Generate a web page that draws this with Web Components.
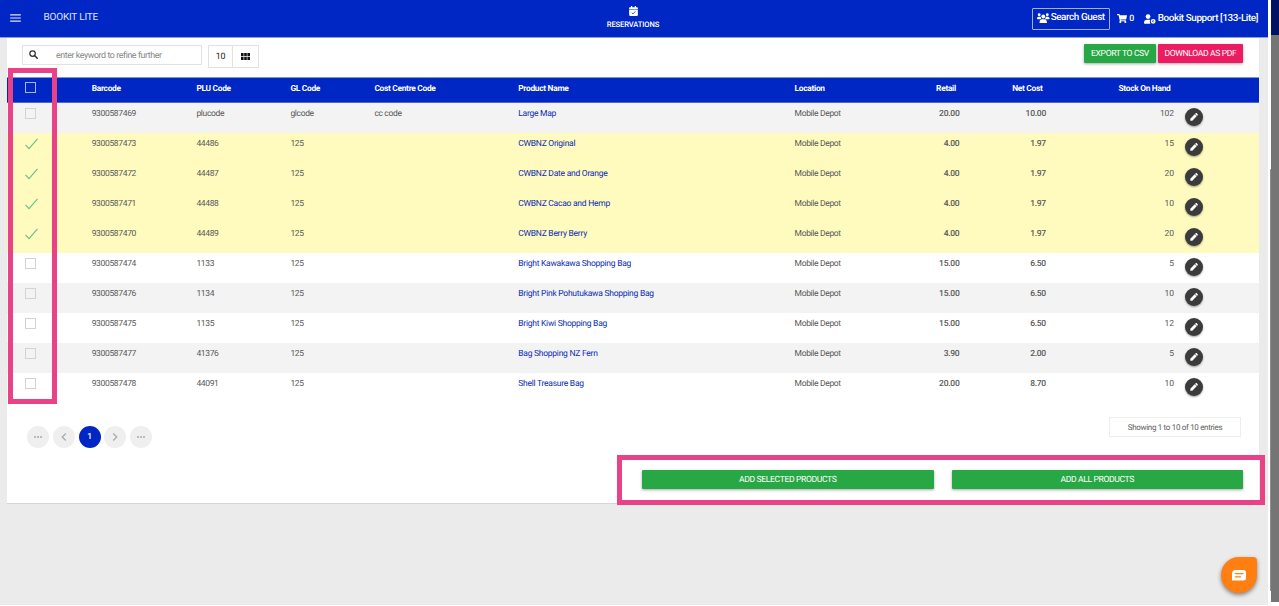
<!DOCTYPE html>
<html lang="en">
<head>
<meta charset="utf-8">
<title>Bookit Lite</title>
<style>
  html, body {
    margin: 0;
    height: 606px;
    overflow: hidden;
    background: #fff;
    font-family: Roboto, "Liberation Sans", sans-serif;
    text-rendering: geometricPrecision;
  }
</style>
</head>
<body>
<bk-app></bk-app>

<script>
const ICONS = {
  menu: ['0 0 12 9', '<path d="M0 1h12M0 4.500h12M0 8h12" stroke="currentColor" stroke-width="1.300"/>'],
  calendar: ['0 0 448 512', '<path fill="currentColor" d="M436 160H12c-6.600 0-12-5.400-12-12v-36c0-26.500 21.500-48 48-48h48V12c0-6.600 5.400-12 12-12h40c6.600 0 12 5.400 12 12v52h128V12c0-6.600 5.400-12 12-12h40c6.600 0 12 5.400 12 12v52h48c26.500 0 48 21.500 48 48v36c0 6.600-5.400 12-12 12zM12 192h424c6.600 0 12 5.400 12 12v260c0 26.500-21.500 48-48 48H48c-26.500 0-48-21.500-48-48V204c0-6.600 5.400-12 12-12z"/><path d="M135 350l60 55 120-125" fill="none" stroke="#0027c4" stroke-width="42"/>'],
  search: ['0 0 24 24', '<circle cx="9.500" cy="9.500" r="7.300" fill="none" stroke="currentColor" stroke-width="3.300"/><path d="M15.500 15.500l6.500 6.500" stroke="currentColor" stroke-width="4" stroke-linecap="round"/>'],
  grid: ['0 0 9 7', '<path fill="currentColor" d="M0 0h2.600v3.100H0zM3.200 0h2.600v3.100H3.200zM6.400 0H9v3.100H6.400zM0 3.800h2.600v3.100H0zM3.200 3.800h2.600v3.100H3.200zM6.400 3.800H9v3.100H6.400z"/>'],
  users: ['0 0 640 512', '<g fill="currentColor"><circle cx="112" cy="90" r="72"/><circle cx="528" cy="90" r="72"/><circle cx="320" cy="180" r="98"/><path d="M0 285c0-55 35-95 85-95h60c25 0 45 9 58 24-7 55 12 85 35 106H20c-12 0-20-8-20-20zM640 285c0-55-35-95-85-95h-60c-25 0-45 9-58 24 7 55-12 85-35 106h218c12 0 20-8 20-20zM128 480c0-90 55-160 135-160h114c80 0 135 70 135 160 0 18-12 32-30 32H158c-18 0-30-14-30-32z"/></g>'],
  cart: ['0 0 576 512', '<path fill="currentColor" d="M528 301l47-208c4-15-8-29-23-29H159l-9-45C148 8 138 0 126 0H24C11 0 0 11 0 24v16c0 13 11 24 24 24h70l70 343c-17 10-28 28-28 49 0 31 25 56 56 56s56-25 56-56c0-16-6-30-17-40h210c-11 10-17 24-17 40 0 31 25 56 56 56s56-25 56-56c0-22-13-41-32-50l6-26c3-15-8-29-24-29H218l-6-32h293c11 0 21-8 23-18z"/>'],
  agent: ['0 0 640 512', '<g fill="currentColor"><circle cx="215" cy="125" r="125"/><path d="M0 460c0-95 65-160 150-160h130c22 0 40 4 56 12-36 60-33 135 14 200H48c-27 0-48-25-48-52z"/></g><circle cx="490" cy="380" r="92" fill="none" stroke="currentColor" stroke-width="75"/><path d="M480 325v62h55" fill="none" stroke="currentColor" stroke-width="32"/>'],
  pencil: ['0 0 24 24', '<path fill="currentColor" d="M1 23v-6L14 4l6 6L7 23zM15.200 2.800l1.800-1.700c1-1 2.500-1 3.500 0l2.400 2.400c1 1 1 2.500 0 3.500l-1.700 1.800z"/>'],
  tick: ['0 0 13 12', '<path d="M.5 6.800 4 10.600 12.500 .8" fill="none" stroke="currentColor" stroke-width="1.100"/>'],
  dots: ['0 0 10 10', '<path d="M1 5h2M4 5h2M7 5h2" stroke="currentColor" stroke-width="1.500"/>'],
  prev: ['0 0 10 10', '<path d="M6.800 1.500 3.200 5l3.600 3.500" fill="none" stroke="currentColor" stroke-width="1.300"/>'],
  next: ['0 0 10 10', '<path d="M3.200 1.500 6.800 5 3.200 8.500" fill="none" stroke="currentColor" stroke-width="1.300"/>'],
  chat: ['0 0 14 11', '<path fill="#fff" d="M3.500 0h8Q14 0 14 2.500V8q0 2.500-2.500 2.500H0V3.500Q0 0 3.500 0z"/><path d="M3.300 3.600h7.800M3.300 6.900h5.200" stroke="#ff7f13" stroke-width="1.200" stroke-linecap="round"/>']
};

class BkIcon extends HTMLElement {
  constructor() {
    super();
    this.attachShadow({ mode: 'open' });
  }

  connectedCallback() {
    const [box, shape] = ICONS[this.getAttribute('name')];
    this.shadowRoot.innerHTML = `
      <style>
        :host { display: inline-block; flex: none; }
        svg { display: block; width: 100%; height: 100%; }
      </style>
      <svg viewBox="${box}">${shape}</svg>`;
  }
}
customElements.define('bk-icon', BkIcon);

class BkHeader extends HTMLElement {
  constructor() {
    super();
    this.attachShadow({ mode: 'open' });
    this.shadowRoot.innerHTML = `
      <style>
        :host {
          display: grid;
          grid-template-columns: 1fr 100px 1fr;
          box-sizing: border-box;
          height: 38px;
          padding: 0 10px;
          background: #0027c4;
          color: #fff;
          border-bottom: 1px solid #8d9de2;
        }
        .left, .right { display: flex; align-items: center; }
        .left { font-size: 10px; letter-spacing: -.2px; color: #dfe4f8; padding-bottom: 2px; }
        .left bk-icon { width: 11px; height: 8px; margin-right: 22.500px; }
        .center {
          display: flex;
          flex-direction: column;
          align-items: center;
          padding-top: 6px;
          margin-left: -2px;
          font-size: 7.600px;
          letter-spacing: -.12px;
          font-weight: 500;
        }
        .center bk-icon { width: 9px; height: 10px; margin-bottom: 4px; }
        .right {
          justify-content: flex-end;
          font-size: 9.900px;
          letter-spacing: -.41px;
          font-weight: 500;
          white-space: nowrap;
        }
        .guest {
          display: flex;
          box-sizing: border-box;
          width: 78px;
          height: 22px;
          padding: 0 0 2px 4.500px;
          align-items: center;
          border: 1px solid #a3b1eb;
          border-radius: 1px;
        }
        .guest bk-icon { width: 12.500px; height: 10px; margin-right: 1px; }
        .cart { width: 10px; height: 9px; margin: 0 2.500px 0 7px; }
        .count { font-size: 8.800px; margin-right: 10.500px; }
        .agent { width: 12px; height: 10px; margin-right: 1.500px; }
      </style>
      <div class="left"><bk-icon name="menu"></bk-icon><span>BOOKIT LITE</span></div>
      <div class="center"><bk-icon name="calendar"></bk-icon><span>RESERVATIONS</span></div>
      <div class="right">
        <div class="guest"><bk-icon name="users"></bk-icon><span>Search Guest</span></div>
        <bk-icon class="cart" name="cart"></bk-icon><span class="count">0</span>
        <bk-icon class="agent" name="agent"></bk-icon><span>Bookit Support [133-Lite]</span>
      </div>`;
  }
}
customElements.define('bk-header', BkHeader);

class BkButton extends HTMLElement {
  constructor() {
    super();
    this.attachShadow({ mode: 'open' });
    this.shadowRoot.innerHTML = `
      <style>
        :host {
          display: flex;
          align-items: center;
          justify-content: center;
          height: 19px;
          background: #28a745;
          color: #fff;
          font-size: 8.600px;
          letter-spacing: -.37px;
          border-radius: 1px;
          box-shadow: 0 1px 3px rgba(0, 0, 0, .35);
          white-space: nowrap;
        }
        :host([kind="pink"]) { background: #ec1c62; }
      </style>
      <slot></slot>`;
  }
}
customElements.define('bk-button', BkButton);

class BkToolbar extends HTMLElement {
  constructor() {
    super();
    this.attachShadow({ mode: 'open' });
    this.shadowRoot.innerHTML = `
      <style>
        :host {
          display: flex;
          align-items: flex-start;
          box-sizing: border-box;
          height: 38.500px;
          padding: 7px 16px 0 15px;
        }
        .search {
          display: flex;
          align-items: center;
          box-sizing: border-box;
          width: 180px;
          height: 20px;
          border: 1px solid #e2e2e2;
          padding-left: 6px;
          font-size: 8.800px;
          letter-spacing: -.4px;
          color: #858585;
        }
        .search span { padding-top: 1px; }
        .search bk-icon { width: 9px; height: 9px; margin: -1px 18px 0 0; color: #333; }
        .view {
          display: flex;
          box-sizing: border-box;
          width: 51px;
          height: 23px;
          margin-left: 6px;
          border: 1px solid #e2e2e2;
          font-size: 8.800px;
          letter-spacing: -.2px;
          color: #222;
        }
        .view div { width: 25px; display: flex; align-items: center; justify-content: center; }
        .view div:first-child { width: 23px; }
        .view div + div { border-left: 1px solid #e2e2e2; }
        .view bk-icon { width: 9px; height: 7px; color: #111; }
        .space { flex: 1; }
        bk-button { margin-top: -1px; }
        .csv { width: 72px; margin-right: 2px; }
        .pdf { width: 85px; }
      </style>
      <div class="search"><bk-icon name="search"></bk-icon><span>enter keyword to refine further</span></div>
      <div class="view"><div>10</div><div><bk-icon name="grid"></bk-icon></div></div>
      <div class="space"></div>
      <bk-button class="csv">EXPORT TO CSV</bk-button>
      <bk-button class="pdf" kind="pink">DOWNLOAD AS PDF</bk-button>`;
  }
}
customElements.define('bk-toolbar', BkToolbar);

const GRID = 'grid-template-columns: 84.700px 104.700px 94px 84px 143.900px 276.300px 100.400px 64.500px 86.500px 128px 40px;';

class BkRow extends HTMLElement {
  constructor() {
    super();
    this.attachShadow({ mode: 'open' });
  }

  connectedCallback() {
    const cells = this.getAttribute('cells').split('|');
    const checked = this.hasAttribute('checked');
    const head = this.hasAttribute('head');
    this.shadowRoot.innerHTML = `
      <style>
        :host {
          display: grid;
          ${GRID}
          box-sizing: border-box;
          height: 30px;
          padding-top: 5.400px;
          line-height: 12px;
          font-size: 8.500px;
          letter-spacing: -.34px;
          color: #595959;
          background: #fff;
          white-space: nowrap;
        }
        :host([odd]) { background: #f3f3f3; }
        :host([checked]) { background: #fffbbf; }
        :host([head]) {
          height: 26px;
          padding-top: 6.500px;
          background: #0027c4;
          color: #fff;
          font-weight: 700;
          font-size: 8.400px;
          letter-spacing: -.3px;
          box-shadow: inset 0 1px #7f92df, inset 0 -1px #4d67d6;
        }
        .box {
          display: block;
          box-sizing: border-box;
          width: 11px;
          height: 11px;
          margin-left: 18px;
          border: 1px solid #d3d3d3;
        }
        :host([head]) .box { border-color: #a9b5e8; margin-top: -1px; }
        .tick { width: 13px; height: 12px; margin-left: 18px; color: #66bf8d; }
        .name { color: #0d2cb4; letter-spacing: -.26px; }
        .num { text-align: right; }
        .stock { letter-spacing: -.1px; }
        .bold { font-weight: 500; letter-spacing: -.26px; }
        :host([head]) .name { color: #fff; letter-spacing: -.3px; }
        :host([head]) .num { padding-right: 3.500px; letter-spacing: -.3px; font-weight: 700; }
        .edit {
          display: flex;
          align-items: center;
          justify-content: center;
          width: 18px;
          height: 18px;
          margin: .6px 0 0 11px;
          border-radius: 50%;
          background: #3b3b3b;
          color: #fff;
          box-shadow: 0 1px 2px rgba(0, 0, 0, .4);
        }
        .edit bk-icon { width: 8px; height: 8px; }
      </style>
      <div>${checked ? '<bk-icon class="tick" name="tick"></bk-icon>' : '<span class="box"></span>'}</div>
      <div>${cells[0]}</div>
      <div>${cells[1]}</div>
      <div>${cells[2]}</div>
      <div>${cells[3]}</div>
      <div class="name">${cells[4]}</div>
      <div>${cells[5]}</div>
      <div class="num bold">${cells[6]}</div>
      <div class="num bold">${cells[7]}</div>
      <div class="num stock">${cells[8]}</div>
      ${head ? '' : '<div class="edit"><bk-icon name="pencil"></bk-icon></div>'}`;
  }
}
customElements.define('bk-row', BkRow);

const PRODUCTS = [
  ['9300587469|plucode|glcode|cc code|Large Map|Mobile Depot|20.00|10.00|102', false],
  ['9300587473|44486|125||CWBNZ Original|Mobile Depot|4.00|1.97|15', true],
  ['9300587472|44487|125||CWBNZ Date and Orange|Mobile Depot|4.00|1.97|20', true],
  ['9300587471|44488|125||CWBNZ Cacao and Hemp|Mobile Depot|4.00|1.97|10', true],
  ['9300587470|44489|125||CWBNZ Berry Berry|Mobile Depot|4.00|1.97|20', true],
  ['9300587474|1133|125||Bright Kawakawa Shopping Bag|Mobile Depot|15.00|6.50|5', false],
  ['9300587476|1134|125||Bright Pink Pohutukawa Shopping Bag|Mobile Depot|15.00|6.50|10', false],
  ['9300587475|1135|125||Bright Kiwi Shopping Bag|Mobile Depot|15.00|6.50|12', false],
  ['9300587477|41376|125||Bag Shopping NZ Fern|Mobile Depot|3.90|2.00|5', false],
  ['9300587478|44091|125||Shell Treasure Bag|Mobile Depot|20.00|8.70|10', false]
];

class BkTable extends HTMLElement {
  constructor() {
    super();
    this.attachShadow({ mode: 'open' });
    // stripes start on the first row
    this.shadowRoot.innerHTML = `
      <style>:host { display: block; }</style>
      <bk-row head cells="Barcode|PLU Code|GL Code|Cost Centre Code|Product Name|Location|Retail|Net Cost|Stock On Hand"></bk-row>
      ${PRODUCTS.map(([cells, checked], i) =>
        `<bk-row cells="${cells}" ${i % 2 ? '' : 'odd'} ${checked ? 'checked' : ''}></bk-row>`
      ).join('')}`;
  }
}
customElements.define('bk-table', BkTable);

class BkPager extends HTMLElement {
  constructor() {
    super();
    this.attachShadow({ mode: 'open' });
    this.shadowRoot.innerHTML = `
      <style>
        :host {
          display: flex;
          align-items: flex-start;
          justify-content: space-between;
          padding: 14.500px 18px 0 20px;
        }
        .pages { display: flex; gap: 3.800px; padding-top: 9px; }
        .pages div {
          display: flex;
          align-items: center;
          justify-content: center;
          width: 22px;
          height: 22px;
          border-radius: 50%;
          background: #efefef;
          color: #aaa;
          font-size: 8.500px;
        }
        .pages .current { background: #0027c4; color: #fff; font-weight: 500; }
        bk-icon { width: 10px; height: 10px; }
        .info {
          display: flex;
          align-items: center;
          justify-content: center;
          box-sizing: border-box;
          width: 132px;
          height: 20px;
          border: 1px solid #ededed;
          font-size: 8px;
          letter-spacing: -.32px;
          color: #606060;
        }
      </style>
      <div class="pages">
        <div><bk-icon name="dots"></bk-icon></div>
        <div><bk-icon name="prev"></bk-icon></div>
        <div class="current">1</div>
        <div><bk-icon name="next"></bk-icon></div>
        <div><bk-icon name="dots"></bk-icon></div>
      </div>
      <div class="info">Showing 1 to 10 of 10 entries</div>`;
  }
}
customElements.define('bk-pager', BkPager);

class BkMarker extends HTMLElement {
  constructor() {
    super();
    this.attachShadow({ mode: 'open' });
    this.shadowRoot.innerHTML = `
      <style>
        :host {
          display: block;
          position: absolute;
          box-sizing: border-box;
          border: 5px solid #e94286;
          pointer-events: none;
        }
      </style>`;
  }
}
customElements.define('bk-marker', BkMarker);

class BkChat extends HTMLElement {
  constructor() {
    super();
    this.attachShadow({ mode: 'open' });
    this.shadowRoot.innerHTML = `
      <style>
        :host {
          display: flex;
          align-items: center;
          justify-content: center;
          width: 36px;
          height: 36px;
          border-radius: 50% 4px 50% 50%;
          background: #ff7f13;
          box-shadow: 0 2px 4px rgba(0, 0, 0, .45);
        }
        bk-icon { width: 14px; height: 11px; }
      </style>
      <bk-icon name="chat"></bk-icon>`;
  }
}
customElements.define('bk-chat', BkChat);

class BkApp extends HTMLElement {
  constructor() {
    super();
    this.attachShadow({ mode: 'open' });
    this.shadowRoot.innerHTML = `
      <style>
        :host { display: flex; position: relative; width: 1279px; height: 606px; }
        main { width: 1268px; height: 605px; background: #ebebeb; }
        .card {
          box-sizing: border-box;
          width: 1252px;
          height: 466px;
          margin-left: 7px;
          background: #fff;
          border-bottom: 1px solid #d5d5d5;
        }
        .actions { display: flex; gap: 18px; padding: 22px 16px 0 635px; }
        .actions bk-button { flex: 1; }
        .scroll { width: 3px; display: flex; flex-direction: column; align-items: flex-end; }
        .scroll div { width: 1.500px; height: 422px; margin-top: 169px; background: #8d8d8d; border-radius: 1px; }
        .behind { width: 8px; height: 602px; background: #757575; }
        .behind div { height: 35px; background: #001262; }
        .select { left: 8px; top: 68px; width: 49px; height: 336px; }
        .add { left: 617px; top: 455px; width: 648px; height: 50px; }
        bk-chat { position: absolute; left: 1220.500px; top: 557px; }
      </style>
      <main>
        <bk-header></bk-header>
        <div class="card">
          <bk-toolbar></bk-toolbar>
          <bk-table></bk-table>
          <bk-pager></bk-pager>
          <div class="actions">
            <bk-button>ADD SELECTED PRODUCTS</bk-button>
            <bk-button>ADD ALL PRODUCTS</bk-button>
          </div>
        </div>
      </main>
      <div class="scroll"><div></div></div>
      <div class="behind"><div></div></div>
      <bk-marker class="select"></bk-marker>
      <bk-marker class="add"></bk-marker>
      <bk-chat></bk-chat>`;
  }
}
customElements.define('bk-app', BkApp);
</script>
</body>
</html>
